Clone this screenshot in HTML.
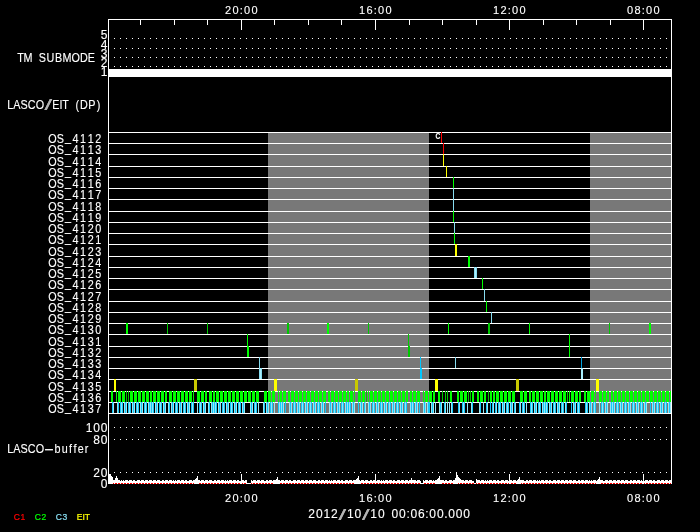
<!DOCTYPE html>
<html><head><meta charset="utf-8"><title>LASCO/EIT schedule</title>
<style>
html,body{margin:0;padding:0;background:#000;}
body{width:700px;height:532px;overflow:hidden;position:relative;}
svg{display:block;position:absolute;left:0;top:0;}
svg.tx{will-change:transform;}
text{font-family:"Liberation Sans",sans-serif;font-size:12px;fill:#fff;stroke:#fff;stroke-width:.12px;}
</style></head><body>
<svg width="700" height="532" viewBox="0 0 700 532" shape-rendering="crispEdges">
<rect width="700" height="532" fill="#000"/>
<rect x="268" y="132" width="161" height="282" fill="#787878"/>
<rect x="590" y="132" width="81" height="282" fill="#787878"/>
<rect x="108" y="69" width="564" height="8" fill="#fff"/>
<line x1="114" y1="38.5" x2="671" y2="38.5" stroke="#fff" stroke-width="1" stroke-dasharray="1 5"/>
<line x1="114" y1="48.5" x2="671" y2="48.5" stroke="#fff" stroke-width="1" stroke-dasharray="1 5"/>
<line x1="114" y1="57.5" x2="671" y2="57.5" stroke="#fff" stroke-width="1" stroke-dasharray="1 5"/>
<line x1="114" y1="66.5" x2="671" y2="66.5" stroke="#fff" stroke-width="1" stroke-dasharray="1 5"/>
<line x1="114" y1="427.5" x2="671" y2="427.5" stroke="#fff" stroke-width="1" stroke-dasharray="1 5"/>
<line x1="114" y1="439.5" x2="671" y2="439.5" stroke="#fff" stroke-width="1" stroke-dasharray="1 5"/>
<line x1="114" y1="472.5" x2="671" y2="472.5" stroke="#fff" stroke-width="1" stroke-dasharray="1 5"/>
<rect x="108" y="132" width="564" height="1" fill="#fff"/>
<rect x="108" y="143" width="564" height="1" fill="#fff"/>
<rect x="108" y="154" width="564" height="1" fill="#fff"/>
<rect x="108" y="166" width="564" height="1" fill="#fff"/>
<rect x="108" y="177" width="564" height="1" fill="#fff"/>
<rect x="108" y="188" width="564" height="1" fill="#fff"/>
<rect x="108" y="199" width="564" height="1" fill="#fff"/>
<rect x="108" y="211" width="564" height="1" fill="#fff"/>
<rect x="108" y="222" width="564" height="1" fill="#fff"/>
<rect x="108" y="233" width="564" height="1" fill="#fff"/>
<rect x="108" y="244" width="564" height="1" fill="#fff"/>
<rect x="108" y="256" width="564" height="1" fill="#fff"/>
<rect x="108" y="267" width="564" height="1" fill="#fff"/>
<rect x="108" y="278" width="564" height="1" fill="#fff"/>
<rect x="108" y="289" width="564" height="1" fill="#fff"/>
<rect x="108" y="301" width="564" height="1" fill="#fff"/>
<rect x="108" y="312" width="564" height="1" fill="#fff"/>
<rect x="108" y="323" width="564" height="1" fill="#fff"/>
<rect x="108" y="334" width="564" height="1" fill="#fff"/>
<rect x="108" y="346" width="564" height="1" fill="#fff"/>
<rect x="108" y="357" width="564" height="1" fill="#fff"/>
<rect x="108" y="368" width="564" height="1" fill="#fff"/>
<rect x="108" y="379" width="564" height="1" fill="#fff"/>
<rect x="108" y="391" width="564" height="1" fill="#fff"/>
<rect x="108" y="402" width="564" height="1" fill="#fff"/>
<rect x="108" y="413" width="564" height="1" fill="#fff"/>
<rect x="441" y="132" width="1" height="11" fill="#ff0000"/>
<rect x="443" y="143" width="1" height="11" fill="#ff0000"/>
<rect x="443" y="154" width="1" height="12" fill="#ffff00"/>
<rect x="446" y="166" width="1" height="11" fill="#ffff00"/>
<rect x="453" y="177" width="1" height="11" fill="#00ff00"/>
<rect x="453" y="188" width="1" height="11" fill="#87dcf0"/>
<rect x="453" y="199" width="1" height="12" fill="#87dcf0"/>
<rect x="453" y="211" width="1" height="11" fill="#00ff00"/>
<rect x="454" y="222" width="1" height="11" fill="#87dcf0"/>
<rect x="454" y="233" width="1" height="11" fill="#00ff00"/>
<rect x="455" y="244" width="2" height="12" fill="#ffff00"/>
<rect x="468" y="256" width="2" height="11" fill="#00ff00"/>
<rect x="474" y="267" width="3" height="11" fill="#87dcf0"/>
<rect x="475" y="267" width="1" height="11" fill="#aaf0ff"/>
<rect x="482" y="278" width="1" height="11" fill="#00ff00"/>
<rect x="484" y="289" width="1" height="12" fill="#87dcf0"/>
<rect x="486" y="301" width="1" height="11" fill="#00ff00"/>
<rect x="491" y="312" width="1" height="11" fill="#87dcf0"/>
<rect x="126" y="323" width="2" height="11" fill="#00ff00"/>
<rect x="167" y="323" width="1" height="11" fill="#00c800"/>
<rect x="207" y="323" width="1" height="11" fill="#00c800"/>
<rect x="287" y="323" width="2" height="11" fill="#00c800"/>
<rect x="327" y="323" width="2" height="11" fill="#00ff00"/>
<rect x="368" y="323" width="1" height="11" fill="#00c800"/>
<rect x="448" y="323" width="1" height="11" fill="#00ff00"/>
<rect x="488" y="323" width="2" height="11" fill="#00c800"/>
<rect x="529" y="323" width="1" height="11" fill="#00ff00"/>
<rect x="609" y="323" width="1" height="11" fill="#00c800"/>
<rect x="649" y="323" width="2" height="11" fill="#00ff00"/>
<rect x="247" y="334" width="1" height="12" fill="#00ff00"/>
<rect x="247" y="346" width="2" height="11" fill="#00ff00"/>
<rect x="408" y="334" width="1" height="12" fill="#00c800"/>
<rect x="408" y="346" width="2" height="11" fill="#00c800"/>
<rect x="569" y="334" width="1" height="12" fill="#00ff00"/>
<rect x="569" y="346" width="1" height="11" fill="#00ff00"/>
<rect x="259" y="357" width="1" height="11" fill="#87dcf0"/>
<rect x="259" y="368" width="3" height="11" fill="#87dcf0"/>
<rect x="260" y="368" width="1" height="11" fill="#aaf0ff"/>
<rect x="420" y="357" width="1" height="11" fill="#00c8ff"/>
<rect x="420" y="368" width="2" height="11" fill="#00c8ff"/>
<rect x="455" y="357" width="1" height="11" fill="#87dcf0"/>
<rect x="581" y="357" width="1" height="11" fill="#00a0dc"/>
<rect x="581" y="368" width="2" height="11" fill="#aaf0ff"/>
<rect x="114" y="379" width="2" height="12" fill="#ffff00"/>
<rect x="194" y="379" width="3" height="12" fill="#c8c800"/>
<rect x="274" y="379" width="3" height="12" fill="#ffff00"/>
<rect x="355" y="379" width="3" height="12" fill="#c8c800"/>
<rect x="435" y="379" width="3" height="12" fill="#ffff00"/>
<rect x="516" y="379" width="3" height="12" fill="#c8c800"/>
<rect x="596" y="379" width="3" height="12" fill="#ffff00"/>
<rect x="111" y="391" width="2" height="11" fill="#00ff00"/>
<rect x="116" y="391" width="1" height="11" fill="#00ff00"/>
<rect x="118" y="391" width="3" height="11" fill="#00ff00"/>
<rect x="122" y="391" width="3" height="11" fill="#00ff00"/>
<rect x="126" y="391" width="1" height="11" fill="#00c800"/>
<rect x="128" y="391" width="1" height="11" fill="#00c800"/>
<rect x="130" y="391" width="3" height="11" fill="#00ff00"/>
<rect x="134" y="391" width="3" height="11" fill="#00ff00"/>
<rect x="138" y="391" width="3" height="11" fill="#00ff00"/>
<rect x="142" y="391" width="3" height="11" fill="#00ff00"/>
<rect x="146" y="391" width="3" height="11" fill="#00ff00"/>
<rect x="150" y="391" width="2" height="11" fill="#00ff00"/>
<rect x="153" y="391" width="3" height="11" fill="#00ff00"/>
<rect x="157" y="391" width="3" height="11" fill="#00ff00"/>
<rect x="161" y="391" width="3" height="11" fill="#00ff00"/>
<rect x="165" y="391" width="2" height="11" fill="#00ff00"/>
<rect x="169" y="391" width="3" height="11" fill="#00ff00"/>
<rect x="173" y="391" width="3" height="11" fill="#00ff00"/>
<rect x="177" y="391" width="3" height="11" fill="#00ff00"/>
<rect x="181" y="391" width="3" height="11" fill="#00ff00"/>
<rect x="185" y="391" width="3" height="11" fill="#00ff00"/>
<rect x="189" y="391" width="3" height="11" fill="#00ff00"/>
<rect x="193" y="391" width="1" height="11" fill="#00ff00"/>
<rect x="197" y="391" width="3" height="11" fill="#00ff00"/>
<rect x="201" y="391" width="3" height="11" fill="#00ff00"/>
<rect x="205" y="391" width="2" height="11" fill="#00ff00"/>
<rect x="209" y="391" width="3" height="11" fill="#00ff00"/>
<rect x="213" y="391" width="2" height="11" fill="#00ff00"/>
<rect x="216" y="391" width="3" height="11" fill="#00ff00"/>
<rect x="220" y="391" width="3" height="11" fill="#00ff00"/>
<rect x="224" y="391" width="3" height="11" fill="#00ff00"/>
<rect x="228" y="391" width="3" height="11" fill="#00ff00"/>
<rect x="232" y="391" width="3" height="11" fill="#00ff00"/>
<rect x="236" y="391" width="3" height="11" fill="#00ff00"/>
<rect x="240" y="391" width="3" height="11" fill="#00ff00"/>
<rect x="244" y="391" width="3" height="11" fill="#00ff00"/>
<rect x="248" y="391" width="3" height="11" fill="#00ff00"/>
<rect x="252" y="391" width="3" height="11" fill="#00ff00"/>
<rect x="256" y="391" width="3" height="11" fill="#00ff00"/>
<rect x="264" y="391" width="3" height="11" fill="#00ff00"/>
<rect x="268" y="391" width="3" height="11" fill="#00ff00"/>
<rect x="272" y="391" width="3" height="11" fill="#00ff00"/>
<rect x="278" y="391" width="1" height="11" fill="#00ff00"/>
<rect x="280" y="391" width="2" height="11" fill="#00ff00"/>
<rect x="283" y="391" width="3" height="11" fill="#00ff00"/>
<rect x="288" y="391" width="2" height="11" fill="#00ff00"/>
<rect x="291" y="391" width="3" height="11" fill="#00ff00"/>
<rect x="295" y="391" width="3" height="11" fill="#00ff00"/>
<rect x="299" y="391" width="3" height="11" fill="#00ff00"/>
<rect x="303" y="391" width="3" height="11" fill="#00ff00"/>
<rect x="307" y="391" width="3" height="11" fill="#00ff00"/>
<rect x="311" y="391" width="3" height="11" fill="#00ff00"/>
<rect x="315" y="391" width="3" height="11" fill="#00ff00"/>
<rect x="319" y="391" width="3" height="11" fill="#00ff00"/>
<rect x="323" y="391" width="3" height="11" fill="#00ff00"/>
<rect x="328" y="391" width="2" height="11" fill="#00ff00"/>
<rect x="331" y="391" width="3" height="11" fill="#00ff00"/>
<rect x="335" y="391" width="3" height="11" fill="#00ff00"/>
<rect x="339" y="391" width="3" height="11" fill="#00ff00"/>
<rect x="343" y="391" width="3" height="11" fill="#00ff00"/>
<rect x="347" y="391" width="2" height="11" fill="#00ff00"/>
<rect x="350" y="391" width="3" height="11" fill="#00ff00"/>
<rect x="354" y="391" width="1" height="11" fill="#00ff00"/>
<rect x="358" y="391" width="3" height="11" fill="#00ff00"/>
<rect x="362" y="391" width="3" height="11" fill="#00ff00"/>
<rect x="366" y="391" width="1" height="11" fill="#00c800"/>
<rect x="368" y="391" width="1" height="11" fill="#00ff00"/>
<rect x="370" y="391" width="3" height="11" fill="#00ff00"/>
<rect x="374" y="391" width="3" height="11" fill="#00ff00"/>
<rect x="378" y="391" width="3" height="11" fill="#00ff00"/>
<rect x="382" y="391" width="3" height="11" fill="#00ff00"/>
<rect x="386" y="391" width="3" height="11" fill="#00ff00"/>
<rect x="390" y="391" width="3" height="11" fill="#00ff00"/>
<rect x="394" y="391" width="3" height="11" fill="#00ff00"/>
<rect x="398" y="391" width="3" height="11" fill="#00ff00"/>
<rect x="402" y="391" width="3" height="11" fill="#00ff00"/>
<rect x="406" y="391" width="2" height="11" fill="#00ff00"/>
<rect x="410" y="391" width="2" height="11" fill="#00ff00"/>
<rect x="413" y="391" width="3" height="11" fill="#00ff00"/>
<rect x="417" y="391" width="3" height="11" fill="#00ff00"/>
<rect x="423" y="391" width="1" height="11" fill="#00ff00"/>
<rect x="425" y="391" width="3" height="11" fill="#00ff00"/>
<rect x="429" y="391" width="3" height="11" fill="#00ff00"/>
<rect x="433" y="391" width="2" height="11" fill="#00ff00"/>
<rect x="438" y="391" width="2" height="11" fill="#00ff00"/>
<rect x="442" y="391" width="1" height="11" fill="#00c800"/>
<rect x="445" y="391" width="1" height="11" fill="#00c800"/>
<rect x="447" y="391" width="1" height="11" fill="#00c800"/>
<rect x="450" y="391" width="2" height="11" fill="#00ff00"/>
<rect x="457" y="391" width="2" height="11" fill="#00ff00"/>
<rect x="460" y="391" width="3" height="11" fill="#00ff00"/>
<rect x="464" y="391" width="3" height="11" fill="#00ff00"/>
<rect x="468" y="391" width="1" height="11" fill="#00c800"/>
<rect x="470" y="391" width="1" height="11" fill="#00c800"/>
<rect x="472" y="391" width="2" height="11" fill="#00ff00"/>
<rect x="477" y="391" width="2" height="11" fill="#00ff00"/>
<rect x="480" y="391" width="3" height="11" fill="#00ff00"/>
<rect x="484" y="391" width="2" height="11" fill="#00ff00"/>
<rect x="488" y="391" width="1" height="11" fill="#00c800"/>
<rect x="490" y="391" width="2" height="11" fill="#00ff00"/>
<rect x="493" y="391" width="2" height="11" fill="#00ff00"/>
<rect x="496" y="391" width="3" height="11" fill="#00ff00"/>
<rect x="500" y="391" width="3" height="11" fill="#00ff00"/>
<rect x="504" y="391" width="3" height="11" fill="#00ff00"/>
<rect x="508" y="391" width="3" height="11" fill="#00ff00"/>
<rect x="512" y="391" width="3" height="11" fill="#00ff00"/>
<rect x="520" y="391" width="3" height="11" fill="#00ff00"/>
<rect x="524" y="391" width="3" height="11" fill="#00ff00"/>
<rect x="529" y="391" width="2" height="11" fill="#00ff00"/>
<rect x="532" y="391" width="3" height="11" fill="#00ff00"/>
<rect x="536" y="391" width="3" height="11" fill="#00ff00"/>
<rect x="540" y="391" width="3" height="11" fill="#00ff00"/>
<rect x="544" y="391" width="2" height="11" fill="#00ff00"/>
<rect x="547" y="391" width="3" height="11" fill="#00ff00"/>
<rect x="551" y="391" width="3" height="11" fill="#00ff00"/>
<rect x="555" y="391" width="3" height="11" fill="#00ff00"/>
<rect x="559" y="391" width="3" height="11" fill="#00ff00"/>
<rect x="563" y="391" width="3" height="11" fill="#00ff00"/>
<rect x="567" y="391" width="1" height="11" fill="#00c800"/>
<rect x="569" y="391" width="1" height="11" fill="#00ff00"/>
<rect x="571" y="391" width="3" height="11" fill="#00ff00"/>
<rect x="575" y="391" width="3" height="11" fill="#00ff00"/>
<rect x="579" y="391" width="2" height="11" fill="#00ff00"/>
<rect x="584" y="391" width="2" height="11" fill="#00ff00"/>
<rect x="587" y="391" width="3" height="11" fill="#00ff00"/>
<rect x="591" y="391" width="3" height="11" fill="#00ff00"/>
<rect x="595" y="391" width="1" height="11" fill="#00ff00"/>
<rect x="599" y="391" width="3" height="11" fill="#00ff00"/>
<rect x="603" y="391" width="3" height="11" fill="#00ff00"/>
<rect x="607" y="391" width="2" height="11" fill="#00ff00"/>
<rect x="611" y="391" width="2" height="11" fill="#00ff00"/>
<rect x="614" y="391" width="3" height="11" fill="#00ff00"/>
<rect x="618" y="391" width="3" height="11" fill="#00ff00"/>
<rect x="622" y="391" width="3" height="11" fill="#00ff00"/>
<rect x="626" y="391" width="3" height="11" fill="#00ff00"/>
<rect x="630" y="391" width="3" height="11" fill="#00ff00"/>
<rect x="634" y="391" width="3" height="11" fill="#00ff00"/>
<rect x="638" y="391" width="3" height="11" fill="#00ff00"/>
<rect x="642" y="391" width="3" height="11" fill="#00ff00"/>
<rect x="646" y="391" width="3" height="11" fill="#00ff00"/>
<rect x="650" y="391" width="3" height="11" fill="#00ff00"/>
<rect x="654" y="391" width="3" height="11" fill="#00ff00"/>
<rect x="658" y="391" width="3" height="11" fill="#00ff00"/>
<rect x="662" y="391" width="3" height="11" fill="#00ff00"/>
<rect x="666" y="391" width="3" height="11" fill="#00ff00"/>
<rect x="670" y="391" width="1" height="11" fill="#00ff00"/>
<rect x="112" y="402" width="1" height="11" fill="#14c8fa"/>
<rect x="113" y="402" width="1" height="11" fill="#96e6f5"/>
<rect x="117" y="402" width="1" height="11" fill="#96e6f5"/>
<rect x="118" y="402" width="1" height="11" fill="#14c8fa"/>
<rect x="120" y="402" width="1" height="11" fill="#14c8fa"/>
<rect x="121" y="402" width="1" height="11" fill="#96e6f5"/>
<rect x="122" y="402" width="1" height="11" fill="#14c8fa"/>
<rect x="124" y="402" width="1" height="11" fill="#96e6f5"/>
<rect x="125" y="402" width="1" height="11" fill="#14c8fa"/>
<rect x="126" y="402" width="1" height="11" fill="#96e6f5"/>
<rect x="128" y="402" width="1" height="11" fill="#14c8fa"/>
<rect x="129" y="402" width="1" height="11" fill="#96e6f5"/>
<rect x="130" y="402" width="1" height="11" fill="#14c8fa"/>
<rect x="132" y="402" width="1" height="11" fill="#96e6f5"/>
<rect x="133" y="402" width="1" height="11" fill="#14c8fa"/>
<rect x="134" y="402" width="1" height="11" fill="#96e6f5"/>
<rect x="136" y="402" width="1" height="11" fill="#14c8fa"/>
<rect x="137" y="402" width="1" height="11" fill="#96e6f5"/>
<rect x="138" y="402" width="1" height="11" fill="#14c8fa"/>
<rect x="140" y="402" width="1" height="11" fill="#96e6f5"/>
<rect x="141" y="402" width="1" height="11" fill="#14c8fa"/>
<rect x="142" y="402" width="1" height="11" fill="#96e6f5"/>
<rect x="144" y="402" width="1" height="11" fill="#14c8fa"/>
<rect x="145" y="402" width="1" height="11" fill="#96e6f5"/>
<rect x="146" y="402" width="1" height="11" fill="#14c8fa"/>
<rect x="148" y="402" width="1" height="11" fill="#96e6f5"/>
<rect x="149" y="402" width="1" height="11" fill="#14c8fa"/>
<rect x="150" y="402" width="1" height="11" fill="#96e6f5"/>
<rect x="151" y="402" width="1" height="11" fill="#14c8fa"/>
<rect x="152" y="402" width="1" height="11" fill="#96e6f5"/>
<rect x="153" y="402" width="1" height="11" fill="#14c8fa"/>
<rect x="155" y="402" width="1" height="11" fill="#96e6f5"/>
<rect x="156" y="402" width="1" height="11" fill="#14c8fa"/>
<rect x="157" y="402" width="1" height="11" fill="#96e6f5"/>
<rect x="159" y="402" width="1" height="11" fill="#14c8fa"/>
<rect x="160" y="402" width="1" height="11" fill="#96e6f5"/>
<rect x="161" y="402" width="1" height="11" fill="#14c8fa"/>
<rect x="163" y="402" width="1" height="11" fill="#96e6f5"/>
<rect x="164" y="402" width="1" height="11" fill="#14c8fa"/>
<rect x="165" y="402" width="1" height="11" fill="#96e6f5"/>
<rect x="168" y="402" width="1" height="11" fill="#96e6f5"/>
<rect x="169" y="402" width="1" height="11" fill="#14c8fa"/>
<rect x="171" y="402" width="1" height="11" fill="#96e6f5"/>
<rect x="172" y="402" width="1" height="11" fill="#14c8fa"/>
<rect x="173" y="402" width="1" height="11" fill="#96e6f5"/>
<rect x="175" y="402" width="1" height="11" fill="#14c8fa"/>
<rect x="176" y="402" width="1" height="11" fill="#96e6f5"/>
<rect x="177" y="402" width="1" height="11" fill="#14c8fa"/>
<rect x="179" y="402" width="1" height="11" fill="#96e6f5"/>
<rect x="180" y="402" width="1" height="11" fill="#14c8fa"/>
<rect x="181" y="402" width="1" height="11" fill="#96e6f5"/>
<rect x="183" y="402" width="1" height="11" fill="#14c8fa"/>
<rect x="184" y="402" width="1" height="11" fill="#96e6f5"/>
<rect x="185" y="402" width="1" height="11" fill="#14c8fa"/>
<rect x="187" y="402" width="1" height="11" fill="#96e6f5"/>
<rect x="188" y="402" width="1" height="11" fill="#14c8fa"/>
<rect x="189" y="402" width="1" height="11" fill="#96e6f5"/>
<rect x="191" y="402" width="1" height="11" fill="#14c8fa"/>
<rect x="192" y="402" width="1" height="11" fill="#96e6f5"/>
<rect x="193" y="402" width="1" height="11" fill="#14c8fa"/>
<rect x="197" y="402" width="1" height="11" fill="#96e6f5"/>
<rect x="199" y="402" width="1" height="11" fill="#14c8fa"/>
<rect x="200" y="402" width="1" height="11" fill="#96e6f5"/>
<rect x="201" y="402" width="1" height="11" fill="#14c8fa"/>
<rect x="203" y="402" width="1" height="11" fill="#96e6f5"/>
<rect x="204" y="402" width="1" height="11" fill="#14c8fa"/>
<rect x="205" y="402" width="1" height="11" fill="#96e6f5"/>
<rect x="208" y="402" width="1" height="11" fill="#96e6f5"/>
<rect x="209" y="402" width="1" height="11" fill="#14c8fa"/>
<rect x="211" y="402" width="1" height="11" fill="#96e6f5"/>
<rect x="212" y="402" width="1" height="11" fill="#14c8fa"/>
<rect x="213" y="402" width="1" height="11" fill="#96e6f5"/>
<rect x="214" y="402" width="1" height="11" fill="#14c8fa"/>
<rect x="215" y="402" width="1" height="11" fill="#96e6f5"/>
<rect x="216" y="402" width="1" height="11" fill="#14c8fa"/>
<rect x="218" y="402" width="1" height="11" fill="#96e6f5"/>
<rect x="219" y="402" width="1" height="11" fill="#14c8fa"/>
<rect x="220" y="402" width="1" height="11" fill="#96e6f5"/>
<rect x="222" y="402" width="1" height="11" fill="#14c8fa"/>
<rect x="223" y="402" width="1" height="11" fill="#96e6f5"/>
<rect x="224" y="402" width="1" height="11" fill="#14c8fa"/>
<rect x="226" y="402" width="1" height="11" fill="#96e6f5"/>
<rect x="227" y="402" width="1" height="11" fill="#14c8fa"/>
<rect x="228" y="402" width="1" height="11" fill="#96e6f5"/>
<rect x="230" y="402" width="1" height="11" fill="#14c8fa"/>
<rect x="231" y="402" width="1" height="11" fill="#96e6f5"/>
<rect x="232" y="402" width="1" height="11" fill="#14c8fa"/>
<rect x="234" y="402" width="1" height="11" fill="#96e6f5"/>
<rect x="235" y="402" width="1" height="11" fill="#14c8fa"/>
<rect x="236" y="402" width="1" height="11" fill="#96e6f5"/>
<rect x="238" y="402" width="1" height="11" fill="#14c8fa"/>
<rect x="239" y="402" width="1" height="11" fill="#96e6f5"/>
<rect x="240" y="402" width="1" height="11" fill="#14c8fa"/>
<rect x="242" y="402" width="1" height="11" fill="#96e6f5"/>
<rect x="243" y="402" width="1" height="11" fill="#14c8fa"/>
<rect x="244" y="402" width="1" height="11" fill="#96e6f5"/>
<rect x="250" y="402" width="1" height="11" fill="#96e6f5"/>
<rect x="251" y="402" width="1" height="11" fill="#14c8fa"/>
<rect x="252" y="402" width="1" height="11" fill="#96e6f5"/>
<rect x="254" y="402" width="1" height="11" fill="#14c8fa"/>
<rect x="255" y="402" width="1" height="11" fill="#96e6f5"/>
<rect x="256" y="402" width="1" height="11" fill="#14c8fa"/>
<rect x="258" y="402" width="1" height="11" fill="#96e6f5"/>
<rect x="263" y="402" width="1" height="11" fill="#96e6f5"/>
<rect x="264" y="402" width="1" height="11" fill="#14c8fa"/>
<rect x="266" y="402" width="1" height="11" fill="#96e6f5"/>
<rect x="267" y="402" width="1" height="11" fill="#14c8fa"/>
<rect x="268" y="402" width="1" height="11" fill="#96e6f5"/>
<rect x="270" y="402" width="1" height="11" fill="#14c8fa"/>
<rect x="271" y="402" width="1" height="11" fill="#96e6f5"/>
<rect x="272" y="402" width="1" height="11" fill="#14c8fa"/>
<rect x="274" y="402" width="1" height="11" fill="#96e6f5"/>
<rect x="278" y="402" width="1" height="11" fill="#14c8fa"/>
<rect x="279" y="402" width="1" height="11" fill="#96e6f5"/>
<rect x="280" y="402" width="1" height="11" fill="#14c8fa"/>
<rect x="281" y="402" width="1" height="11" fill="#96e6f5"/>
<rect x="282" y="402" width="1" height="11" fill="#14c8fa"/>
<rect x="283" y="402" width="1" height="11" fill="#96e6f5"/>
<rect x="285" y="402" width="1" height="11" fill="#14c8fa"/>
<rect x="289" y="402" width="1" height="11" fill="#96e6f5"/>
<rect x="290" y="402" width="1" height="11" fill="#14c8fa"/>
<rect x="291" y="402" width="1" height="11" fill="#96e6f5"/>
<rect x="293" y="402" width="1" height="11" fill="#14c8fa"/>
<rect x="294" y="402" width="1" height="11" fill="#96e6f5"/>
<rect x="295" y="402" width="1" height="11" fill="#14c8fa"/>
<rect x="297" y="402" width="1" height="11" fill="#96e6f5"/>
<rect x="298" y="402" width="1" height="11" fill="#14c8fa"/>
<rect x="299" y="402" width="1" height="11" fill="#96e6f5"/>
<rect x="301" y="402" width="1" height="11" fill="#14c8fa"/>
<rect x="302" y="402" width="1" height="11" fill="#96e6f5"/>
<rect x="303" y="402" width="1" height="11" fill="#14c8fa"/>
<rect x="305" y="402" width="1" height="11" fill="#96e6f5"/>
<rect x="306" y="402" width="1" height="11" fill="#14c8fa"/>
<rect x="307" y="402" width="1" height="11" fill="#96e6f5"/>
<rect x="309" y="402" width="1" height="11" fill="#14c8fa"/>
<rect x="310" y="402" width="1" height="11" fill="#96e6f5"/>
<rect x="311" y="402" width="1" height="11" fill="#14c8fa"/>
<rect x="313" y="402" width="1" height="11" fill="#96e6f5"/>
<rect x="314" y="402" width="1" height="11" fill="#14c8fa"/>
<rect x="315" y="402" width="1" height="11" fill="#96e6f5"/>
<rect x="317" y="402" width="1" height="11" fill="#14c8fa"/>
<rect x="318" y="402" width="1" height="11" fill="#96e6f5"/>
<rect x="319" y="402" width="1" height="11" fill="#14c8fa"/>
<rect x="321" y="402" width="1" height="11" fill="#96e6f5"/>
<rect x="322" y="402" width="1" height="11" fill="#14c8fa"/>
<rect x="323" y="402" width="1" height="11" fill="#96e6f5"/>
<rect x="325" y="402" width="1" height="11" fill="#14c8fa"/>
<rect x="329" y="402" width="1" height="11" fill="#96e6f5"/>
<rect x="330" y="402" width="1" height="11" fill="#14c8fa"/>
<rect x="331" y="402" width="1" height="11" fill="#96e6f5"/>
<rect x="333" y="402" width="1" height="11" fill="#14c8fa"/>
<rect x="334" y="402" width="1" height="11" fill="#96e6f5"/>
<rect x="335" y="402" width="1" height="11" fill="#14c8fa"/>
<rect x="337" y="402" width="1" height="11" fill="#96e6f5"/>
<rect x="338" y="402" width="1" height="11" fill="#14c8fa"/>
<rect x="339" y="402" width="1" height="11" fill="#96e6f5"/>
<rect x="341" y="402" width="1" height="11" fill="#14c8fa"/>
<rect x="342" y="402" width="1" height="11" fill="#96e6f5"/>
<rect x="343" y="402" width="1" height="11" fill="#14c8fa"/>
<rect x="345" y="402" width="1" height="11" fill="#96e6f5"/>
<rect x="346" y="402" width="1" height="11" fill="#14c8fa"/>
<rect x="347" y="402" width="1" height="11" fill="#96e6f5"/>
<rect x="348" y="402" width="1" height="11" fill="#14c8fa"/>
<rect x="349" y="402" width="1" height="11" fill="#96e6f5"/>
<rect x="350" y="402" width="1" height="11" fill="#14c8fa"/>
<rect x="352" y="402" width="1" height="11" fill="#96e6f5"/>
<rect x="353" y="402" width="1" height="11" fill="#14c8fa"/>
<rect x="354" y="402" width="1" height="11" fill="#96e6f5"/>
<rect x="358" y="402" width="1" height="11" fill="#14c8fa"/>
<rect x="360" y="402" width="1" height="11" fill="#96e6f5"/>
<rect x="361" y="402" width="1" height="11" fill="#14c8fa"/>
<rect x="362" y="402" width="1" height="11" fill="#96e6f5"/>
<rect x="364" y="402" width="1" height="11" fill="#14c8fa"/>
<rect x="365" y="402" width="1" height="11" fill="#96e6f5"/>
<rect x="368" y="402" width="1" height="11" fill="#96e6f5"/>
<rect x="369" y="402" width="1" height="11" fill="#14c8fa"/>
<rect x="370" y="402" width="1" height="11" fill="#96e6f5"/>
<rect x="372" y="402" width="1" height="11" fill="#14c8fa"/>
<rect x="373" y="402" width="1" height="11" fill="#96e6f5"/>
<rect x="374" y="402" width="1" height="11" fill="#14c8fa"/>
<rect x="376" y="402" width="1" height="11" fill="#96e6f5"/>
<rect x="377" y="402" width="1" height="11" fill="#14c8fa"/>
<rect x="378" y="402" width="1" height="11" fill="#96e6f5"/>
<rect x="380" y="402" width="1" height="11" fill="#14c8fa"/>
<rect x="381" y="402" width="1" height="11" fill="#96e6f5"/>
<rect x="382" y="402" width="1" height="11" fill="#14c8fa"/>
<rect x="384" y="402" width="1" height="11" fill="#96e6f5"/>
<rect x="385" y="402" width="1" height="11" fill="#14c8fa"/>
<rect x="386" y="402" width="1" height="11" fill="#96e6f5"/>
<rect x="388" y="402" width="1" height="11" fill="#14c8fa"/>
<rect x="389" y="402" width="1" height="11" fill="#96e6f5"/>
<rect x="390" y="402" width="1" height="11" fill="#14c8fa"/>
<rect x="392" y="402" width="1" height="11" fill="#96e6f5"/>
<rect x="393" y="402" width="1" height="11" fill="#14c8fa"/>
<rect x="394" y="402" width="1" height="11" fill="#96e6f5"/>
<rect x="396" y="402" width="1" height="11" fill="#14c8fa"/>
<rect x="397" y="402" width="1" height="11" fill="#96e6f5"/>
<rect x="398" y="402" width="1" height="11" fill="#14c8fa"/>
<rect x="400" y="402" width="1" height="11" fill="#96e6f5"/>
<rect x="401" y="402" width="1" height="11" fill="#14c8fa"/>
<rect x="402" y="402" width="1" height="11" fill="#96e6f5"/>
<rect x="404" y="402" width="1" height="11" fill="#14c8fa"/>
<rect x="405" y="402" width="1" height="11" fill="#96e6f5"/>
<rect x="406" y="402" width="1" height="11" fill="#14c8fa"/>
<rect x="410" y="402" width="1" height="11" fill="#96e6f5"/>
<rect x="411" y="402" width="1" height="11" fill="#14c8fa"/>
<rect x="412" y="402" width="1" height="11" fill="#96e6f5"/>
<rect x="413" y="402" width="1" height="11" fill="#14c8fa"/>
<rect x="415" y="402" width="1" height="11" fill="#96e6f5"/>
<rect x="416" y="402" width="1" height="11" fill="#14c8fa"/>
<rect x="417" y="402" width="1" height="11" fill="#96e6f5"/>
<rect x="419" y="402" width="1" height="11" fill="#14c8fa"/>
<rect x="423" y="402" width="1" height="11" fill="#96e6f5"/>
<rect x="424" y="402" width="1" height="11" fill="#14c8fa"/>
<rect x="425" y="402" width="1" height="11" fill="#96e6f5"/>
<rect x="427" y="402" width="1" height="11" fill="#96e6f5"/>
<rect x="428" y="402" width="2" height="11" fill="#14c8fa"/>
<rect x="431" y="402" width="1" height="11" fill="#96e6f5"/>
<rect x="432" y="402" width="1" height="11" fill="#14c8fa"/>
<rect x="433" y="402" width="1" height="11" fill="#96e6f5"/>
<rect x="435" y="402" width="1" height="11" fill="#96e6f5"/>
<rect x="439" y="402" width="1" height="11" fill="#96e6f5"/>
<rect x="440" y="402" width="1" height="11" fill="#14c8fa"/>
<rect x="441" y="402" width="1" height="11" fill="#96e6f5"/>
<rect x="444" y="402" width="1" height="11" fill="#14c8fa"/>
<rect x="445" y="402" width="1" height="11" fill="#96e6f5"/>
<rect x="447" y="402" width="1" height="11" fill="#96e6f5"/>
<rect x="449" y="402" width="1" height="11" fill="#96e6f5"/>
<rect x="451" y="402" width="1" height="11" fill="#96e6f5"/>
<rect x="452" y="402" width="1" height="11" fill="#14c8fa"/>
<rect x="458" y="402" width="1" height="11" fill="#14c8fa"/>
<rect x="459" y="402" width="1" height="11" fill="#96e6f5"/>
<rect x="462" y="402" width="1" height="11" fill="#14c8fa"/>
<rect x="463" y="402" width="1" height="11" fill="#96e6f5"/>
<rect x="464" y="402" width="1" height="11" fill="#14c8fa"/>
<rect x="467" y="402" width="1" height="11" fill="#96e6f5"/>
<rect x="471" y="402" width="1" height="11" fill="#96e6f5"/>
<rect x="472" y="402" width="1" height="11" fill="#14c8fa"/>
<rect x="479" y="402" width="1" height="11" fill="#96e6f5"/>
<rect x="480" y="402" width="1" height="11" fill="#14c8fa"/>
<rect x="483" y="402" width="1" height="11" fill="#96e6f5"/>
<rect x="486" y="402" width="1" height="11" fill="#14c8fa"/>
<rect x="487" y="402" width="1" height="11" fill="#96e6f5"/>
<rect x="490" y="402" width="1" height="11" fill="#14c8fa"/>
<rect x="492" y="402" width="1" height="11" fill="#14c8fa"/>
<rect x="493" y="402" width="1" height="11" fill="#96e6f5"/>
<rect x="495" y="402" width="1" height="11" fill="#14c8fa"/>
<rect x="496" y="402" width="1" height="11" fill="#96e6f5"/>
<rect x="498" y="402" width="1" height="11" fill="#14c8fa"/>
<rect x="499" y="402" width="1" height="11" fill="#96e6f5"/>
<rect x="500" y="402" width="1" height="11" fill="#14c8fa"/>
<rect x="502" y="402" width="1" height="11" fill="#96e6f5"/>
<rect x="503" y="402" width="1" height="11" fill="#14c8fa"/>
<rect x="504" y="402" width="1" height="11" fill="#96e6f5"/>
<rect x="506" y="402" width="1" height="11" fill="#14c8fa"/>
<rect x="507" y="402" width="1" height="11" fill="#96e6f5"/>
<rect x="508" y="402" width="1" height="11" fill="#14c8fa"/>
<rect x="510" y="402" width="1" height="11" fill="#96e6f5"/>
<rect x="511" y="402" width="1" height="11" fill="#14c8fa"/>
<rect x="512" y="402" width="1" height="11" fill="#96e6f5"/>
<rect x="514" y="402" width="1" height="11" fill="#14c8fa"/>
<rect x="515" y="402" width="1" height="11" fill="#96e6f5"/>
<rect x="519" y="402" width="1" height="11" fill="#14c8fa"/>
<rect x="520" y="402" width="1" height="11" fill="#96e6f5"/>
<rect x="522" y="402" width="1" height="11" fill="#14c8fa"/>
<rect x="523" y="402" width="1" height="11" fill="#96e6f5"/>
<rect x="524" y="402" width="1" height="11" fill="#14c8fa"/>
<rect x="526" y="402" width="1" height="11" fill="#96e6f5"/>
<rect x="530" y="402" width="1" height="11" fill="#14c8fa"/>
<rect x="531" y="402" width="1" height="11" fill="#96e6f5"/>
<rect x="532" y="402" width="1" height="11" fill="#14c8fa"/>
<rect x="534" y="402" width="1" height="11" fill="#96e6f5"/>
<rect x="535" y="402" width="1" height="11" fill="#14c8fa"/>
<rect x="536" y="402" width="1" height="11" fill="#96e6f5"/>
<rect x="538" y="402" width="1" height="11" fill="#14c8fa"/>
<rect x="539" y="402" width="1" height="11" fill="#96e6f5"/>
<rect x="540" y="402" width="1" height="11" fill="#14c8fa"/>
<rect x="542" y="402" width="1" height="11" fill="#96e6f5"/>
<rect x="543" y="402" width="1" height="11" fill="#14c8fa"/>
<rect x="544" y="402" width="1" height="11" fill="#96e6f5"/>
<rect x="545" y="402" width="1" height="11" fill="#14c8fa"/>
<rect x="546" y="402" width="1" height="11" fill="#96e6f5"/>
<rect x="547" y="402" width="1" height="11" fill="#14c8fa"/>
<rect x="549" y="402" width="1" height="11" fill="#96e6f5"/>
<rect x="550" y="402" width="1" height="11" fill="#14c8fa"/>
<rect x="551" y="402" width="1" height="11" fill="#96e6f5"/>
<rect x="553" y="402" width="1" height="11" fill="#14c8fa"/>
<rect x="554" y="402" width="1" height="11" fill="#96e6f5"/>
<rect x="555" y="402" width="1" height="11" fill="#14c8fa"/>
<rect x="557" y="402" width="1" height="11" fill="#96e6f5"/>
<rect x="558" y="402" width="1" height="11" fill="#14c8fa"/>
<rect x="559" y="402" width="1" height="11" fill="#96e6f5"/>
<rect x="561" y="402" width="1" height="11" fill="#14c8fa"/>
<rect x="562" y="402" width="1" height="11" fill="#96e6f5"/>
<rect x="563" y="402" width="1" height="11" fill="#14c8fa"/>
<rect x="565" y="402" width="1" height="11" fill="#96e6f5"/>
<rect x="566" y="402" width="1" height="11" fill="#14c8fa"/>
<rect x="571" y="402" width="1" height="11" fill="#14c8fa"/>
<rect x="573" y="402" width="1" height="11" fill="#96e6f5"/>
<rect x="574" y="402" width="1" height="11" fill="#14c8fa"/>
<rect x="575" y="402" width="1" height="11" fill="#96e6f5"/>
<rect x="577" y="402" width="1" height="11" fill="#14c8fa"/>
<rect x="578" y="402" width="1" height="11" fill="#96e6f5"/>
<rect x="579" y="402" width="1" height="11" fill="#14c8fa"/>
<rect x="585" y="402" width="1" height="11" fill="#14c8fa"/>
<rect x="586" y="402" width="1" height="11" fill="#96e6f5"/>
<rect x="587" y="402" width="1" height="11" fill="#14c8fa"/>
<rect x="589" y="402" width="1" height="11" fill="#96e6f5"/>
<rect x="590" y="402" width="1" height="11" fill="#14c8fa"/>
<rect x="591" y="402" width="1" height="11" fill="#96e6f5"/>
<rect x="593" y="402" width="1" height="11" fill="#14c8fa"/>
<rect x="594" y="402" width="1" height="11" fill="#96e6f5"/>
<rect x="595" y="402" width="1" height="11" fill="#14c8fa"/>
<rect x="599" y="402" width="1" height="11" fill="#96e6f5"/>
<rect x="601" y="402" width="1" height="11" fill="#14c8fa"/>
<rect x="602" y="402" width="1" height="11" fill="#96e6f5"/>
<rect x="603" y="402" width="1" height="11" fill="#14c8fa"/>
<rect x="605" y="402" width="1" height="11" fill="#96e6f5"/>
<rect x="606" y="402" width="1" height="11" fill="#14c8fa"/>
<rect x="607" y="402" width="1" height="11" fill="#96e6f5"/>
<rect x="610" y="402" width="1" height="11" fill="#96e6f5"/>
<rect x="611" y="402" width="1" height="11" fill="#14c8fa"/>
<rect x="612" y="402" width="1" height="11" fill="#96e6f5"/>
<rect x="613" y="402" width="1" height="11" fill="#14c8fa"/>
<rect x="614" y="402" width="1" height="11" fill="#96e6f5"/>
<rect x="616" y="402" width="1" height="11" fill="#14c8fa"/>
<rect x="617" y="402" width="1" height="11" fill="#96e6f5"/>
<rect x="618" y="402" width="1" height="11" fill="#14c8fa"/>
<rect x="620" y="402" width="1" height="11" fill="#96e6f5"/>
<rect x="621" y="402" width="1" height="11" fill="#14c8fa"/>
<rect x="622" y="402" width="1" height="11" fill="#96e6f5"/>
<rect x="624" y="402" width="1" height="11" fill="#14c8fa"/>
<rect x="625" y="402" width="1" height="11" fill="#96e6f5"/>
<rect x="626" y="402" width="1" height="11" fill="#14c8fa"/>
<rect x="628" y="402" width="1" height="11" fill="#96e6f5"/>
<rect x="629" y="402" width="1" height="11" fill="#14c8fa"/>
<rect x="630" y="402" width="1" height="11" fill="#96e6f5"/>
<rect x="632" y="402" width="1" height="11" fill="#14c8fa"/>
<rect x="633" y="402" width="1" height="11" fill="#96e6f5"/>
<rect x="634" y="402" width="1" height="11" fill="#14c8fa"/>
<rect x="636" y="402" width="1" height="11" fill="#96e6f5"/>
<rect x="637" y="402" width="1" height="11" fill="#14c8fa"/>
<rect x="638" y="402" width="1" height="11" fill="#96e6f5"/>
<rect x="640" y="402" width="1" height="11" fill="#14c8fa"/>
<rect x="641" y="402" width="1" height="11" fill="#96e6f5"/>
<rect x="642" y="402" width="1" height="11" fill="#14c8fa"/>
<rect x="644" y="402" width="1" height="11" fill="#96e6f5"/>
<rect x="645" y="402" width="1" height="11" fill="#14c8fa"/>
<rect x="646" y="402" width="1" height="11" fill="#96e6f5"/>
<rect x="650" y="402" width="1" height="11" fill="#14c8fa"/>
<rect x="652" y="402" width="1" height="11" fill="#96e6f5"/>
<rect x="653" y="402" width="1" height="11" fill="#14c8fa"/>
<rect x="654" y="402" width="1" height="11" fill="#96e6f5"/>
<rect x="656" y="402" width="1" height="11" fill="#14c8fa"/>
<rect x="657" y="402" width="1" height="11" fill="#96e6f5"/>
<rect x="658" y="402" width="1" height="11" fill="#14c8fa"/>
<rect x="660" y="402" width="1" height="11" fill="#96e6f5"/>
<rect x="661" y="402" width="1" height="11" fill="#14c8fa"/>
<rect x="662" y="402" width="1" height="11" fill="#96e6f5"/>
<rect x="664" y="402" width="1" height="11" fill="#14c8fa"/>
<rect x="665" y="402" width="1" height="11" fill="#96e6f5"/>
<rect x="666" y="402" width="1" height="11" fill="#14c8fa"/>
<rect x="668" y="402" width="1" height="11" fill="#96e6f5"/>
<rect x="669" y="402" width="1" height="11" fill="#14c8fa"/>
<rect x="670" y="402" width="1" height="11" fill="#96e6f5"/>
<rect x="108" y="413" width="564" height="1" fill="#fff"/>
<path d="M109 484V474H111V476H112V477H113V480H115V478H116V476H117V478H118V480H120V481H121V480H122V481H123V480H124V481H125V480H128V481H129V480H132V481H133V480H135V481H137V480H140V481H141V480H144V481H145V480H148V481H149V480H152V481H153V480H156V481H157V480H160V481H162V480H164V481H165V480H168V481H169V480H172V481H173V480H174V481H175V480H176V481H177V480H180V481H181V480H184V481H185V480H187V481H189V480H192V481H193V480H195V479H196V478H197V476H198V480H200V481H201V480H204V481H205V480H208V481H209V480H212V481H214V480H216V481H217V480H220V481H221V480H224V481H225V480H226V481H227V480H228V481H229V480H232V481H233V480H236V481H237V480H239V481H241V480H244V481H245V480H247V483H251V480H252V481H253V480H256V481H257V480H260V481H261V480H264V481H266V480H268V481H269V480H272V481H273V480H276V479H277V477H278V480H280V481H281V480H284V481H285V480H288V481H289V480H291V481H293V480H296V481H297V480H300V481H301V480H304V481H305V480H308V481H309V480H312V481H313V480H316V481H318V480H320V481H321V480H324V481H325V480H328V481H329V480H330V481H331V480H332V481H333V480H336V481H337V480H340V481H341V480H343V481H345V480H348V481H349V480H352V481H353V480H356V479H357V478H358V476H359V480H360V481H361V480H364V481H365V480H368V481H370V480H372V481H373V480H376V481H377V480H380V481H381V480H382V481H383V480H384V481H385V480H388V481H389V480H392V481H393V480H395V481H397V480H400V481H401V480H404V481H405V480H408V481H409V480H411V478H412V480H416V481H417V480H420V481H421V483H423V480H424V481H425V480H428V481H429V480H432V481H433V480H434V481H435V480H437V479H438V478H439V476H440V480H444V481H445V480H447V481H449V480H452V481H453V480H455V478H456V472H457V475H458V477H459V478H460V479H461V480H464V481H465V480H468V481H469V480H472V481H474V483H476V479H477V480H480V481H481V480H484V481H485V480H486V481H487V480H488V481H489V480H492V481H493V480H496V481H497V480H499V481H501V480H504V481H505V480H508V481H509V480H512V481H513V480H516V481H517V480H518V479H519V477H520V480H524V481H526V480H528V481H529V480H532V481H533V480H536V481H537V480H538V481H539V480H540V481H541V480H544V481H545V480H548V481H549V480H551V481H553V480H556V481H557V480H560V481H561V480H564V481H565V480H568V481H569V480H572V481H573V480H576V481H578V480H580V481H581V480H584V481H585V480H588V481H589V480H590V481H591V480H592V481H593V480H596V481H597V480H598V479H599V477H600V480H603V481H605V480H608V481H609V480H612V481H613V480H616V481H617V480H620V481H621V480H624V481H625V480H628V481H630V480H632V481H633V480H636V481H637V480H640V481H641V480H642V481H643V480H644V481H645V480H648V481H649V480H652V481H653V480H655V481H657V480H660V481H661V480H664V481H665V480H668V481H669V480H671V484Z" fill="#fff"/>
<rect x="113" y="483" width="1" height="1" fill="#ff0000"/>
<rect x="115" y="483" width="2" height="1" fill="#ff0000"/>
<rect x="118" y="483" width="2" height="1" fill="#ff0000"/>
<rect x="121" y="483" width="2" height="1" fill="#ff0000"/>
<rect x="124" y="483" width="2" height="1" fill="#ff0000"/>
<rect x="127" y="483" width="2" height="1" fill="#ff0000"/>
<rect x="130" y="483" width="2" height="1" fill="#ff0000"/>
<rect x="133" y="483" width="2" height="1" fill="#ff0000"/>
<rect x="136" y="483" width="2" height="1" fill="#ff0000"/>
<rect x="139" y="483" width="2" height="1" fill="#ff0000"/>
<rect x="142" y="483" width="2" height="1" fill="#ff0000"/>
<rect x="145" y="483" width="2" height="1" fill="#ff0000"/>
<rect x="148" y="483" width="2" height="1" fill="#ff0000"/>
<rect x="151" y="483" width="2" height="1" fill="#ff0000"/>
<rect x="154" y="483" width="2" height="1" fill="#ff0000"/>
<rect x="157" y="483" width="2" height="1" fill="#ff0000"/>
<rect x="160" y="483" width="2" height="1" fill="#ff0000"/>
<rect x="163" y="483" width="2" height="1" fill="#ff0000"/>
<rect x="166" y="483" width="2" height="1" fill="#ff0000"/>
<rect x="169" y="483" width="2" height="1" fill="#ff0000"/>
<rect x="172" y="483" width="2" height="1" fill="#ff0000"/>
<rect x="175" y="483" width="2" height="1" fill="#ff0000"/>
<rect x="178" y="483" width="2" height="1" fill="#ff0000"/>
<rect x="181" y="483" width="2" height="1" fill="#ff0000"/>
<rect x="184" y="483" width="2" height="1" fill="#ff0000"/>
<rect x="187" y="483" width="2" height="1" fill="#ff0000"/>
<rect x="190" y="483" width="2" height="1" fill="#ff0000"/>
<rect x="193" y="483" width="1" height="1" fill="#ff0000"/>
<rect x="199" y="483" width="2" height="1" fill="#ff0000"/>
<rect x="202" y="483" width="2" height="1" fill="#ff0000"/>
<rect x="205" y="483" width="2" height="1" fill="#ff0000"/>
<rect x="208" y="483" width="2" height="1" fill="#ff0000"/>
<rect x="211" y="483" width="2" height="1" fill="#ff0000"/>
<rect x="214" y="483" width="2" height="1" fill="#ff0000"/>
<rect x="217" y="483" width="2" height="1" fill="#ff0000"/>
<rect x="220" y="483" width="2" height="1" fill="#ff0000"/>
<rect x="223" y="483" width="2" height="1" fill="#ff0000"/>
<rect x="226" y="483" width="2" height="1" fill="#ff0000"/>
<rect x="229" y="483" width="2" height="1" fill="#ff0000"/>
<rect x="232" y="483" width="2" height="1" fill="#ff0000"/>
<rect x="235" y="483" width="2" height="1" fill="#ff0000"/>
<rect x="238" y="483" width="2" height="1" fill="#ff0000"/>
<rect x="241" y="483" width="2" height="1" fill="#ff0000"/>
<rect x="244" y="483" width="2" height="1" fill="#ff0000"/>
<rect x="251" y="483" width="1" height="1" fill="#ff0000"/>
<rect x="253" y="483" width="2" height="1" fill="#ff0000"/>
<rect x="256" y="483" width="2" height="1" fill="#ff0000"/>
<rect x="259" y="483" width="2" height="1" fill="#ff0000"/>
<rect x="262" y="483" width="2" height="1" fill="#ff0000"/>
<rect x="265" y="483" width="2" height="1" fill="#ff0000"/>
<rect x="268" y="483" width="2" height="1" fill="#ff0000"/>
<rect x="271" y="483" width="2" height="1" fill="#ff0000"/>
<rect x="280" y="483" width="2" height="1" fill="#ff0000"/>
<rect x="283" y="483" width="2" height="1" fill="#ff0000"/>
<rect x="286" y="483" width="2" height="1" fill="#ff0000"/>
<rect x="289" y="483" width="2" height="1" fill="#ff0000"/>
<rect x="292" y="483" width="2" height="1" fill="#ff0000"/>
<rect x="295" y="483" width="2" height="1" fill="#ff0000"/>
<rect x="298" y="483" width="2" height="1" fill="#ff0000"/>
<rect x="301" y="483" width="2" height="1" fill="#ff0000"/>
<rect x="304" y="483" width="2" height="1" fill="#ff0000"/>
<rect x="307" y="483" width="2" height="1" fill="#ff0000"/>
<rect x="310" y="483" width="2" height="1" fill="#ff0000"/>
<rect x="313" y="483" width="2" height="1" fill="#ff0000"/>
<rect x="316" y="483" width="2" height="1" fill="#ff0000"/>
<rect x="319" y="483" width="2" height="1" fill="#ff0000"/>
<rect x="322" y="483" width="2" height="1" fill="#ff0000"/>
<rect x="325" y="483" width="2" height="1" fill="#ff0000"/>
<rect x="328" y="483" width="2" height="1" fill="#ff0000"/>
<rect x="331" y="483" width="2" height="1" fill="#ff0000"/>
<rect x="334" y="483" width="2" height="1" fill="#ff0000"/>
<rect x="337" y="483" width="2" height="1" fill="#ff0000"/>
<rect x="340" y="483" width="2" height="1" fill="#ff0000"/>
<rect x="343" y="483" width="2" height="1" fill="#ff0000"/>
<rect x="346" y="483" width="2" height="1" fill="#ff0000"/>
<rect x="349" y="483" width="2" height="1" fill="#ff0000"/>
<rect x="352" y="483" width="2" height="1" fill="#ff0000"/>
<rect x="361" y="483" width="2" height="1" fill="#ff0000"/>
<rect x="364" y="483" width="2" height="1" fill="#ff0000"/>
<rect x="367" y="483" width="2" height="1" fill="#ff0000"/>
<rect x="370" y="483" width="2" height="1" fill="#ff0000"/>
<rect x="373" y="483" width="2" height="1" fill="#ff0000"/>
<rect x="376" y="483" width="2" height="1" fill="#ff0000"/>
<rect x="379" y="483" width="2" height="1" fill="#ff0000"/>
<rect x="382" y="483" width="2" height="1" fill="#ff0000"/>
<rect x="385" y="483" width="2" height="1" fill="#ff0000"/>
<rect x="388" y="483" width="2" height="1" fill="#ff0000"/>
<rect x="391" y="483" width="2" height="1" fill="#ff0000"/>
<rect x="394" y="483" width="2" height="1" fill="#ff0000"/>
<rect x="397" y="483" width="2" height="1" fill="#ff0000"/>
<rect x="400" y="483" width="2" height="1" fill="#ff0000"/>
<rect x="403" y="483" width="2" height="1" fill="#ff0000"/>
<rect x="406" y="483" width="2" height="1" fill="#ff0000"/>
<rect x="409" y="483" width="2" height="1" fill="#ff0000"/>
<rect x="412" y="483" width="2" height="1" fill="#ff0000"/>
<rect x="415" y="483" width="2" height="1" fill="#ff0000"/>
<rect x="418" y="483" width="2" height="1" fill="#ff0000"/>
<rect x="424" y="483" width="2" height="1" fill="#ff0000"/>
<rect x="427" y="483" width="2" height="1" fill="#ff0000"/>
<rect x="430" y="483" width="2" height="1" fill="#ff0000"/>
<rect x="433" y="483" width="2" height="1" fill="#ff0000"/>
<rect x="442" y="483" width="2" height="1" fill="#ff0000"/>
<rect x="445" y="483" width="2" height="1" fill="#ff0000"/>
<rect x="448" y="483" width="2" height="1" fill="#ff0000"/>
<rect x="451" y="483" width="2" height="1" fill="#ff0000"/>
<rect x="458" y="483" width="1" height="1" fill="#ff0000"/>
<rect x="460" y="483" width="2" height="1" fill="#ff0000"/>
<rect x="463" y="483" width="2" height="1" fill="#ff0000"/>
<rect x="466" y="483" width="2" height="1" fill="#ff0000"/>
<rect x="469" y="483" width="2" height="1" fill="#ff0000"/>
<rect x="472" y="483" width="2" height="1" fill="#ff0000"/>
<rect x="476" y="483" width="1" height="1" fill="#ff0000"/>
<rect x="478" y="483" width="2" height="1" fill="#ff0000"/>
<rect x="481" y="483" width="2" height="1" fill="#ff0000"/>
<rect x="484" y="483" width="2" height="1" fill="#ff0000"/>
<rect x="487" y="483" width="2" height="1" fill="#ff0000"/>
<rect x="490" y="483" width="2" height="1" fill="#ff0000"/>
<rect x="493" y="483" width="2" height="1" fill="#ff0000"/>
<rect x="496" y="483" width="2" height="1" fill="#ff0000"/>
<rect x="499" y="483" width="2" height="1" fill="#ff0000"/>
<rect x="502" y="483" width="2" height="1" fill="#ff0000"/>
<rect x="505" y="483" width="2" height="1" fill="#ff0000"/>
<rect x="508" y="483" width="2" height="1" fill="#ff0000"/>
<rect x="511" y="483" width="2" height="1" fill="#ff0000"/>
<rect x="514" y="483" width="2" height="1" fill="#ff0000"/>
<rect x="521" y="483" width="1" height="1" fill="#ff0000"/>
<rect x="523" y="483" width="2" height="1" fill="#ff0000"/>
<rect x="526" y="483" width="2" height="1" fill="#ff0000"/>
<rect x="529" y="483" width="2" height="1" fill="#ff0000"/>
<rect x="532" y="483" width="2" height="1" fill="#ff0000"/>
<rect x="535" y="483" width="2" height="1" fill="#ff0000"/>
<rect x="538" y="483" width="2" height="1" fill="#ff0000"/>
<rect x="541" y="483" width="2" height="1" fill="#ff0000"/>
<rect x="544" y="483" width="2" height="1" fill="#ff0000"/>
<rect x="547" y="483" width="2" height="1" fill="#ff0000"/>
<rect x="550" y="483" width="2" height="1" fill="#ff0000"/>
<rect x="553" y="483" width="2" height="1" fill="#ff0000"/>
<rect x="556" y="483" width="2" height="1" fill="#ff0000"/>
<rect x="559" y="483" width="2" height="1" fill="#ff0000"/>
<rect x="562" y="483" width="2" height="1" fill="#ff0000"/>
<rect x="565" y="483" width="2" height="1" fill="#ff0000"/>
<rect x="568" y="483" width="2" height="1" fill="#ff0000"/>
<rect x="571" y="483" width="2" height="1" fill="#ff0000"/>
<rect x="574" y="483" width="2" height="1" fill="#ff0000"/>
<rect x="577" y="483" width="2" height="1" fill="#ff0000"/>
<rect x="580" y="483" width="2" height="1" fill="#ff0000"/>
<rect x="583" y="483" width="2" height="1" fill="#ff0000"/>
<rect x="586" y="483" width="2" height="1" fill="#ff0000"/>
<rect x="589" y="483" width="2" height="1" fill="#ff0000"/>
<rect x="592" y="483" width="2" height="1" fill="#ff0000"/>
<rect x="595" y="483" width="1" height="1" fill="#ff0000"/>
<rect x="601" y="483" width="2" height="1" fill="#ff0000"/>
<rect x="604" y="483" width="2" height="1" fill="#ff0000"/>
<rect x="607" y="483" width="2" height="1" fill="#ff0000"/>
<rect x="610" y="483" width="2" height="1" fill="#ff0000"/>
<rect x="613" y="483" width="2" height="1" fill="#ff0000"/>
<rect x="616" y="483" width="2" height="1" fill="#ff0000"/>
<rect x="619" y="483" width="2" height="1" fill="#ff0000"/>
<rect x="622" y="483" width="2" height="1" fill="#ff0000"/>
<rect x="625" y="483" width="2" height="1" fill="#ff0000"/>
<rect x="628" y="483" width="2" height="1" fill="#ff0000"/>
<rect x="631" y="483" width="2" height="1" fill="#ff0000"/>
<rect x="634" y="483" width="2" height="1" fill="#ff0000"/>
<rect x="637" y="483" width="2" height="1" fill="#ff0000"/>
<rect x="640" y="483" width="2" height="1" fill="#ff0000"/>
<rect x="643" y="483" width="2" height="1" fill="#ff0000"/>
<rect x="646" y="483" width="2" height="1" fill="#ff0000"/>
<rect x="649" y="483" width="2" height="1" fill="#ff0000"/>
<rect x="652" y="483" width="2" height="1" fill="#ff0000"/>
<rect x="655" y="483" width="2" height="1" fill="#ff0000"/>
<rect x="658" y="483" width="2" height="1" fill="#ff0000"/>
<rect x="661" y="483" width="2" height="1" fill="#ff0000"/>
<rect x="664" y="483" width="2" height="1" fill="#ff0000"/>
<rect x="667" y="483" width="2" height="1" fill="#ff0000"/>
<rect x="670" y="483" width="1" height="1" fill="#ff0000"/>
<rect x="108" y="19" width="564" height="1" fill="#fff"/>
<rect x="108" y="19" width="1" height="465" fill="#fff"/>
<rect x="671" y="19" width="1" height="465" fill="#fff"/>
<rect x="140" y="19" width="1" height="6" fill="#fff"/>
<rect x="174" y="19" width="1" height="6" fill="#fff"/>
<rect x="207" y="19" width="1" height="6" fill="#fff"/>
<rect x="241" y="19" width="1" height="11" fill="#fff"/>
<rect x="241" y="474" width="1" height="10" fill="#fff"/>
<rect x="274" y="19" width="1" height="6" fill="#fff"/>
<rect x="308" y="19" width="1" height="6" fill="#fff"/>
<rect x="341" y="19" width="1" height="6" fill="#fff"/>
<rect x="375" y="19" width="1" height="11" fill="#fff"/>
<rect x="375" y="474" width="1" height="10" fill="#fff"/>
<rect x="409" y="19" width="1" height="6" fill="#fff"/>
<rect x="442" y="19" width="1" height="6" fill="#fff"/>
<rect x="476" y="19" width="1" height="6" fill="#fff"/>
<rect x="509" y="19" width="1" height="11" fill="#fff"/>
<rect x="509" y="474" width="1" height="10" fill="#fff"/>
<rect x="543" y="19" width="1" height="6" fill="#fff"/>
<rect x="576" y="19" width="1" height="6" fill="#fff"/>
<rect x="610" y="19" width="1" height="6" fill="#fff"/>
<rect x="643" y="19" width="1" height="11" fill="#fff"/>
<rect x="643" y="474" width="1" height="10" fill="#fff"/>
</svg>
<svg class="tx" width="700" height="532" viewBox="0 0 700 532">
<text x="225.01 232.57 239.77 243.91 251.47" y="14" style="font-size:11px;">20:00</text>
<text x="225.01 232.57 239.77 243.91 251.47" y="502" style="font-size:11px;">20:00</text>
<text x="359.01 366.57 373.77 377.91 385.47" y="14" style="font-size:11px;">16:00</text>
<text x="359.01 366.57 373.77 377.91 385.47" y="502" style="font-size:11px;">16:00</text>
<text x="493.01 500.57 507.77 511.91 519.47" y="14" style="font-size:11px;">12:00</text>
<text x="493.01 500.57 507.77 511.91 519.47" y="502" style="font-size:11px;">12:00</text>
<text x="627.01 634.57 641.77 645.91 653.47" y="14" style="font-size:11px;">08:00</text>
<text x="627.01 634.57 641.77 645.91 653.47" y="502" style="font-size:11px;">08:00</text>
<text x="308.37 315.93 323.49 331.05 338.57 346.93 354.49 362.01 370.37 377.93 386.4 391.53 399.09 406.43 410.43 417.99 425.33 429.33 436.89 444.23 448.23 455.79 463.35" y="518">2012<tspan dy="1.5" textLength="7.6" lengthAdjust="spacingAndGlyphs" style="font-size:14px;fill-opacity:.7">/</tspan><tspan dy="-1.5">1</tspan>0<tspan dy="1.5" textLength="7.6" lengthAdjust="spacingAndGlyphs" style="font-size:14px;fill-opacity:.7">/</tspan><tspan dy="-1.5">1</tspan>0 00:06:00.000</text>
<text x="19.14 26.21 37.94 43.16 51.65 61.01 69.47 79.46 88.82 97.55" y="62" transform="scale(0.9 1)">TM SUBMODE</text>
<text x="8.01 14.7 22.68 30.96 39.65 49.38 58.17 66.17 69.21 77.93 83.9 88.92 98.07 107.42" y="109" transform="scale(0.9 1)">LASCO<tspan dy="1.5" textLength="8.44" lengthAdjust="spacingAndGlyphs" style="font-size:14px;fill-opacity:.7">/</tspan><tspan dy="-1.5">E</tspan>IT (DP)</text>
<text x="8.01 14.7 22.68 30.96 39.65 48.6 60.51 68.49 76.67 81.71 86.34 94.19" y="453" transform="scale(0.9 1)">LASCO<tspan textLength="11.67" lengthAdjust="spacingAndGlyphs">-</tspan>buffer</text>
<text x="53.62 63.1 72.17 80.57 88.97 97.37 105.77" y="143" transform="scale(0.9 1)">OS<tspan dy="-2">_</tspan><tspan dy="2">4112</tspan></text>
<text x="53.62 63.1 72.17 80.57 88.97 97.37 105.77" y="154" transform="scale(0.9 1)">OS<tspan dy="-2">_</tspan><tspan dy="2">4113</tspan></text>
<text x="53.62 63.1 72.17 80.57 88.97 97.37 105.77" y="166" transform="scale(0.9 1)">OS<tspan dy="-2">_</tspan><tspan dy="2">4114</tspan></text>
<text x="53.62 63.1 72.17 80.57 88.97 97.37 105.77" y="177" transform="scale(0.9 1)">OS<tspan dy="-2">_</tspan><tspan dy="2">4115</tspan></text>
<text x="53.62 63.1 72.17 80.57 88.97 97.37 105.77" y="188" transform="scale(0.9 1)">OS<tspan dy="-2">_</tspan><tspan dy="2">4116</tspan></text>
<text x="53.62 63.1 72.17 80.57 88.97 97.37 105.77" y="199" transform="scale(0.9 1)">OS<tspan dy="-2">_</tspan><tspan dy="2">4117</tspan></text>
<text x="53.62 63.1 72.17 80.57 88.97 97.37 105.77" y="211" transform="scale(0.9 1)">OS<tspan dy="-2">_</tspan><tspan dy="2">4118</tspan></text>
<text x="53.62 63.1 72.17 80.57 88.97 97.37 105.77" y="222" transform="scale(0.9 1)">OS<tspan dy="-2">_</tspan><tspan dy="2">4119</tspan></text>
<text x="53.62 63.1 72.17 80.57 88.97 97.37 105.77" y="233" transform="scale(0.9 1)">OS<tspan dy="-2">_</tspan><tspan dy="2">4120</tspan></text>
<text x="53.62 63.1 72.17 80.57 88.97 97.37 105.77" y="244" transform="scale(0.9 1)">OS<tspan dy="-2">_</tspan><tspan dy="2">4121</tspan></text>
<text x="53.62 63.1 72.17 80.57 88.97 97.37 105.77" y="256" transform="scale(0.9 1)">OS<tspan dy="-2">_</tspan><tspan dy="2">4123</tspan></text>
<text x="53.62 63.1 72.17 80.57 88.97 97.37 105.77" y="267" transform="scale(0.9 1)">OS<tspan dy="-2">_</tspan><tspan dy="2">4124</tspan></text>
<text x="53.62 63.1 72.17 80.57 88.97 97.37 105.77" y="278" transform="scale(0.9 1)">OS<tspan dy="-2">_</tspan><tspan dy="2">4125</tspan></text>
<text x="53.62 63.1 72.17 80.57 88.97 97.37 105.77" y="289" transform="scale(0.9 1)">OS<tspan dy="-2">_</tspan><tspan dy="2">4126</tspan></text>
<text x="53.62 63.1 72.17 80.57 88.97 97.37 105.77" y="301" transform="scale(0.9 1)">OS<tspan dy="-2">_</tspan><tspan dy="2">4127</tspan></text>
<text x="53.62 63.1 72.17 80.57 88.97 97.37 105.77" y="312" transform="scale(0.9 1)">OS<tspan dy="-2">_</tspan><tspan dy="2">4128</tspan></text>
<text x="53.62 63.1 72.17 80.57 88.97 97.37 105.77" y="323" transform="scale(0.9 1)">OS<tspan dy="-2">_</tspan><tspan dy="2">4129</tspan></text>
<text x="53.62 63.1 72.17 80.57 88.97 97.37 105.77" y="334" transform="scale(0.9 1)">OS<tspan dy="-2">_</tspan><tspan dy="2">4130</tspan></text>
<text x="53.62 63.1 72.17 80.57 88.97 97.37 105.77" y="346" transform="scale(0.9 1)">OS<tspan dy="-2">_</tspan><tspan dy="2">4131</tspan></text>
<text x="53.62 63.1 72.17 80.57 88.97 97.37 105.77" y="357" transform="scale(0.9 1)">OS<tspan dy="-2">_</tspan><tspan dy="2">4132</tspan></text>
<text x="53.62 63.1 72.17 80.57 88.97 97.37 105.77" y="368" transform="scale(0.9 1)">OS<tspan dy="-2">_</tspan><tspan dy="2">4133</tspan></text>
<text x="53.62 63.1 72.17 80.57 88.97 97.37 105.77" y="379" transform="scale(0.9 1)">OS<tspan dy="-2">_</tspan><tspan dy="2">4134</tspan></text>
<text x="53.62 63.1 72.17 80.57 88.97 97.37 105.77" y="391" transform="scale(0.9 1)">OS<tspan dy="-2">_</tspan><tspan dy="2">4135</tspan></text>
<text x="53.62 63.1 72.17 80.57 88.97 97.37 105.77" y="402" transform="scale(0.9 1)">OS<tspan dy="-2">_</tspan><tspan dy="2">4136</tspan></text>
<text x="53.62 63.1 72.17 80.57 88.97 97.37 105.77" y="413" transform="scale(0.9 1)">OS<tspan dy="-2">_</tspan><tspan dy="2">4137</tspan></text>
<text x="100.78" y="39">5</text>
<text x="100.78" y="48.5">4</text>
<text x="100.78" y="58">3</text>
<text x="100.78" y="67">2</text>
<text x="100.78" y="76">1</text>
<text x="85.66 93.22 100.78" y="432">100</text>
<text x="93.22 100.78" y="444">80</text>
<text x="93.22 100.78" y="477">20</text>
<text x="100.78" y="488">0</text>
<text x="435.6" y="139" textLength="4.8" lengthAdjust="spacingAndGlyphs" style="font-size:8.5px;font-weight:bold">C</text>
<text x="15.18 22.8" y="520" transform="scale(0.9 1)" style="font-size:9.5px;fill:#ff0000;stroke:#ff0000;stroke-width:.25px;">C1</text>
<text x="38.51 46.14" y="520" transform="scale(0.9 1)" style="font-size:9.5px;fill:#00ff00;stroke:#00ff00;stroke-width:.25px;">C2</text>
<text x="61.85 69.47" y="520" transform="scale(0.9 1)" style="font-size:9.5px;fill:#87dcf0;stroke:#87dcf0;stroke-width:.25px;">C3</text>
<text x="85.33 91.68 94.1" y="520" transform="scale(0.9 1)" style="font-size:9.5px;fill:#ffff00;stroke:#ffff00;stroke-width:.25px;">EIT</text>
</svg>
</body></html>
